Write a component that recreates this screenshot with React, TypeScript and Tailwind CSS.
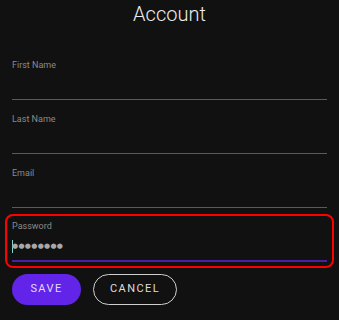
import React from 'react';

type FieldProps = {
  label: string;
};

function Field({ label }: FieldProps) {
  return (
    <div className="flex flex-col pt-[13px] border-b border-[#5a5a5a]">
      <label className="text-[9px] leading-[12px] text-[#8a8a8a]">{label}</label>
      <div className="h-[28px]" />
    </div>
  );
}

export default function App() {
  return (
    <div
      className="min-h-screen w-full bg-[#111111] px-3 text-white"
      style={{ fontFamily: 'Roboto, "Noto Sans", sans-serif' }}
    >
      <h1 className="h-[29px] text-center text-[20px] font-light leading-[29px] text-[#ececec]">Account</h1>

      <div className="mt-[17px] flex flex-col">
        <Field label="First Name" />
        <Field label="Last Name" />
        <Field label="Email" />

        <div className="-mx-[7px] mt-[6px] rounded-[8px] border-2 border-[#ff0000] px-[5px] pt-[4px] pb-[4px]">
          <label className="block text-[9px] leading-[12px] text-[#8a8a8a]">Password</label>
          <div className="flex h-[28px] items-center">
            <span className="h-[13px] w-px bg-[#7fd6cf]" />
            <span className="-ml-px font-['DejaVu_Sans'] text-[7px] leading-none tracking-[0.3px] text-[#a8a8a8]">●●●●●●●●</span>
          </div>
          <div className="h-[2px] bg-[#4a21a3]" />
        </div>

        <div className="mt-[6px] flex gap-3">
          <button
            type="button"
            className="h-[31px] w-[69px] rounded-full bg-[#6224e8] text-[11px] tracking-[1.4px] text-[#e2dcf5]"
          >
            SAVE
          </button>
          <button
            type="button"
            className="h-[31px] w-[84px] rounded-full border border-[#cfcfcf] text-[11px] tracking-[1.4px] text-[#dedede]"
          >
            CANCEL
          </button>
        </div>
      </div>
    </div>
  );
}
